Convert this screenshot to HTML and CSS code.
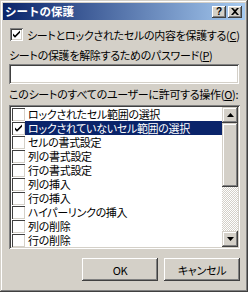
FILE: index.html
```html
<!DOCTYPE html>
<html lang="ja">
<head>
<meta charset="utf-8">
<link rel="stylesheet" href="styles.css">
</head>
<body>
<div class="window">
  <div class="titlebar">
    <span class="title">シートの保護</span>
    <div class="tbuttons">
      <div class="tbtn help">?</div>
      <div class="tbtn close">
        <svg width="8" height="7" viewBox="0 0 8 7"><path d="M0 0h2l2 2 2-2h2L5 3.5 8 7H6L4 5 2 7H0l3-3.5z" fill="#000"/></svg>
      </div>
    </div>
  </div>
  <div class="content">
    <div class="checkrow">
      <span class="cb checked"><svg width="9" height="9" viewBox="0 0 9 9"><path d="M1 3.5l2 2 5-5v2.2l-5 5-2-2z" fill="#000"/></svg></span>
      <span class="cblabel">シートとロックされたセルの内容を保護する(<u>C</u>)</span>
    </div>
    <div class="label lbl-p">シートの保護を解除するためのパスワード(<u>P</u>)</div>
    <div class="input"></div>
    <div class="label lbl-o">このシートのすべてのユーザーに許可する操作(<u>O</u>):</div>
    <div class="listbox">
      <div class="items">
        <div class="item"><span class="lcb"></span><span class="itext">ロックされたセル範囲の選択</span></div>
        <div class="item sel"><span class="lcb"><svg width="9" height="9" viewBox="0 0 9 9"><path d="M1 3.5l2 2 5-5v2.2l-5 5-2-2z" fill="#000"/></svg></span><span class="itext">ロックされていないセル範囲の選択</span></div>
        <div class="item"><span class="lcb"></span><span class="itext">セルの書式設定</span></div>
        <div class="item"><span class="lcb"></span><span class="itext">列の書式設定</span></div>
        <div class="item"><span class="lcb"></span><span class="itext">行の書式設定</span></div>
        <div class="item"><span class="lcb"></span><span class="itext">列の挿入</span></div>
        <div class="item"><span class="lcb"></span><span class="itext">行の挿入</span></div>
        <div class="item"><span class="lcb"></span><span class="itext">ハイパーリンクの挿入</span></div>
        <div class="item"><span class="lcb"></span><span class="itext">列の削除</span></div>
        <div class="item"><span class="lcb"></span><span class="itext">行の削除</span></div>
      </div>
      <div class="scrollbar">
        <div class="sbtn"><svg width="7" height="4" viewBox="0 0 7 4"><path d="M3.5 0L7 4H0z" fill="#000"/></svg></div>
        <div class="thumb"></div>
        <div class="track"></div>
        <div class="sbtn"><svg width="7" height="4" viewBox="0 0 7 4"><path d="M0 0h7L3.5 4z" fill="#000"/></svg></div>
      </div>
    </div>
    <div class="buttons">
      <div class="btn">OK</div>
      <div class="btn">キャンセル</div>
    </div>
  </div>
</div>
</body>
</html>
```
FILE: styles.css
```css
html, body {
  margin: 0;
  padding: 0;
  background: #d4d0c8;
}
body {
  font-family: "Noto Sans CJK JP", "Noto Sans", sans-serif;
  font-size: 11px;
  font-feature-settings: "palt";
  letter-spacing: -0.3px;
  color: #000;
}
.window {
  width: 248px;
  height: 292px;
  box-sizing: border-box;
  background: #d4d0c8;
  box-shadow: inset -1px -1px #404040, inset 1px 1px #d4d0c8, inset -2px -2px #808080, inset 2px 2px #fff;
  padding: 3px;
  display: flex;
  flex-direction: column;
}
.titlebar {
  height: 17px;
  background: linear-gradient(to right, #0a246a, #a6caf0);
  display: flex;
  align-items: center;
  justify-content: space-between;
  padding: 0 3px 0 2px;
  flex: none;
}
.title {
  color: #fff;
  font-weight: bold;
  font-size: 11.5px;
  font-feature-settings: normal;
  letter-spacing: 0;
  line-height: 17px;
}
.tbuttons {
  display: flex;
  gap: 2px;
}
.tbtn {
  width: 14px;
  height: 12px;
  box-sizing: border-box;
  background: #d4d0c8;
  box-shadow: inset -1px -1px #404040, inset 1px 1px #fff, inset -2px -2px #808080;
  display: flex;
  align-items: center;
  justify-content: center;
  font-family: "Liberation Sans", sans-serif;
  font-weight: bold;
  font-size: 10px;
  letter-spacing: 0;
  line-height: 12px;
}
.content {
  padding: 0 6px;
  display: flex;
  flex-direction: column;
}
.checkrow {
  margin-top: 8px;
  display: flex;
  align-items: center;
  height: 13px;
}
.cb, .lcb {
  width: 13px;
  height: 13px;
  box-sizing: border-box;
  background: #fff;
  box-shadow: inset 1px 1px #808080, inset -1px -1px #fff, inset 2px 2px #404040, inset -2px -2px #d4d0c8;
  display: flex;
  align-items: center;
  justify-content: center;
  flex: none;
}
.cb {
  margin-left: 1px;
}
.cblabel {
  margin-left: 4px;
  line-height: 14px;
  white-space: nowrap;
}
.label {
  line-height: 14px;
  white-space: nowrap;
}
.lbl-p {
  margin-top: 7px;
}
.input {
  margin-top: 2px;
  height: 20px;
  box-sizing: border-box;
  background: #fff;
  box-shadow: inset 1px 1px #808080, inset -1px -1px #fff, inset 2px 2px #404040, inset -2px -2px #d4d0c8;
}
.lbl-o {
  margin-top: 3px;
}
.listbox {
  margin-top: 4px;
  height: 144px;
  margin-right: -1px;
  box-sizing: border-box;
  background: #fff;
  box-shadow: inset 1px 1px #808080, inset -1px -1px #fff, inset 2px 2px #404040, inset -2px -2px #d4d0c8;
  padding: 2px;
  display: flex;
}
.items {
  flex: 1;
  display: flex;
  flex-direction: column;
  overflow: hidden;
}
.item {
  height: 14px;
  display: flex;
  align-items: center;
  flex: none;
}
.lcb {
  margin-left: 1px;
  width: 13px;
  height: 13px;
  background: #fff;
  box-shadow: inset 1px 1px #404040, inset -1px -1px #d4d0c8;
}
.itext {
  line-height: 14px;
  white-space: nowrap;
  padding-left: 3px;
  flex: 1;
}
.item.sel .itext {
  background: #0a246a;
  color: #fff;
}
.scrollbar {
  width: 16px;
  display: flex;
  flex-direction: column;
  flex: none;
}
.sbtn {
  height: 16px;
  flex: none;
  box-sizing: border-box;
  background: #d4d0c8;
  box-shadow: inset -1px -1px #404040, inset 1px 1px #d4d0c8, inset -2px -2px #808080, inset 2px 2px #fff;
  display: flex;
  align-items: center;
  justify-content: center;
}
.thumb {
  height: 64px;
  flex: none;
  background: #d4d0c8;
  box-shadow: inset -1px -1px #404040, inset 1px 1px #d4d0c8, inset -2px -2px #808080, inset 2px 2px #fff;
}
.track {
  flex: 1;
  background-image: repeating-conic-gradient(#fff 0 25%, #d4d0c8 0 50%);
  background-size: 2px 2px;
}
.buttons {
  margin-top: 9px;
  display: flex;
  justify-content: flex-end;
  gap: 6px;
  margin-right: -1px;
}
.btn {
  width: 76px;
  height: 23px;
  box-sizing: border-box;
  background: #d4d0c8;
  box-shadow: inset -1px -1px #404040, inset 1px 1px #fff, inset -2px -2px #808080, inset 2px 2px #d4d0c8;
  display: flex;
  align-items: center;
  justify-content: center;
  line-height: 14px;
}
```
